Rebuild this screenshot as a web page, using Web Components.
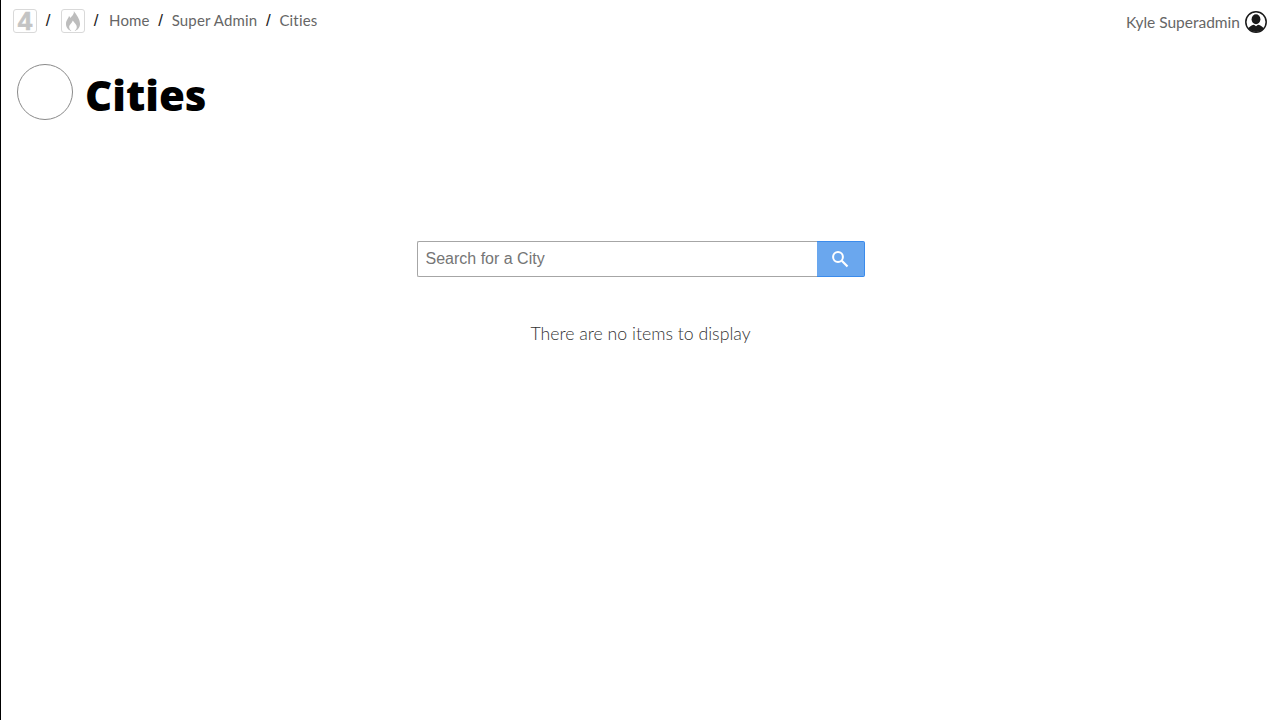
<!DOCTYPE html>
<html>
<head>
<meta charset="utf-8">
<title>Cities</title>
<style>
  html, body { margin: 0; height: 100%; background: #fff; }
  body { border-left: 1px solid #000; box-sizing: border-box; font-family: Lato, "Noto Sans", sans-serif; }
</style>
</head>
<body>
<app-topbar>
  <bread-crumbs slot="left">
    <logo-box>
      <span style="font: 700 26px/24px 'Liberation Sans', sans-serif; color: #c4c4c4; -webkit-text-stroke: 0.6px #c4c4c4;">4</span>
    </logo-box>
    <logo-box>
      <svg width="16" height="20" viewBox="0 0 16 20"><path fill="#bdbdbd" d="M8.8 0C9.4 3.2 6.9 5 5.4 7 5 6.1 4.6 5.5 3.9 5 4 7 1 9 1 13c0 3.6 2.4 6.3 5.4 7-1.4-1-2.2-2.4-2.2-3.9 0-2.5 2.6-3.7 3.6-6.6 1.500 2.400 4 4 4 6.600 0 1.500-.8 2.900-2.200 3.900C12.600 19.300 15 16.600 15 13 15 8 11.400 3.600 8.800 0Z"/></svg>
    </logo-box>
    <a-crumb>Home</a-crumb>
    <a-crumb>Super Admin</a-crumb>
    <a-crumb last>Cities</a-crumb>
  </bread-crumbs>
  <user-menu slot="right" name="Kyle Superadmin"></user-menu>
</app-topbar>
<page-title>Cities</page-title>
<search-panel placeholder="Search for a City" empty="There are no items to display"></search-panel>

<script>
class AppTopbar extends HTMLElement {
  constructor() {
    super();
    this.attachShadow({ mode: "open" });
    this.shadowRoot.innerHTML = `
      <style>
        :host { display: flex; justify-content: space-between; align-items: flex-start; padding: 8px 13px 0 12px; height: 28px; }
      </style>
      <slot name="left"></slot>
      <slot name="right"></slot>
    `;
  }
}

class BreadCrumbs extends HTMLElement {
  constructor() {
    super();
    this.attachShadow({ mode: "open" });
    this.shadowRoot.innerHTML = `
      <style>
        :host { display: flex; align-items: center; height: 25px; }
      </style>
      <slot></slot>
    `;
  }
}

class LogoBox extends HTMLElement {
  constructor() {
    super();
    this.attachShadow({ mode: "open" });
    this.shadowRoot.innerHTML = `
      <style>
        :host { display: inline-flex; align-items: center; }
        .box {
          box-sizing: border-box;
          width: 24px;
          height: 24px;
          display: flex;
          align-items: center;
          justify-content: center;
          border: 1px solid #d9d9d9;
          border-radius: 3px;
        }
        .sep { width: 24px; padding-right: 2px; box-sizing: border-box; text-align: center; font: 17px "Liberation Sans", sans-serif; color: #222; }
      </style>
      <div class="box"><slot></slot></div>
      <span class="sep">/</span>
    `;
  }
}

class ACrumb extends HTMLElement {
  constructor() {
    super();
    this.attachShadow({ mode: "open" });
    const last = this.hasAttribute("last");
    this.shadowRoot.innerHTML = `
      <style>
        :host { display: inline-flex; align-items: center; font: 15px Lato, "Noto Sans", sans-serif; font-variant-ligatures: none; color: #666; }
        .txt { position: relative; top: -1px; letter-spacing: 0.17px; }
        .sep { width: 22px; text-align: center; font: 17px "Liberation Sans", sans-serif; color: #222; }
      </style>
      <span class="txt"><slot></slot></span>${last ? "" : '<span class="sep">/</span>'}
    `;
  }
}

class UserMenu extends HTMLElement {
  constructor() {
    super();
    this.attachShadow({ mode: "open" });
    this.shadowRoot.innerHTML = `
      <style>
        :host { display: flex; align-items: center; gap: 5px; height: 28px; font: 15.5px Lato, "Noto Sans", sans-serif; color: #666; }
        svg { display: block; }
      </style>
      <span>${this.getAttribute("name")}</span>
      <svg width="22" height="22" viewBox="0 0 22 22">
        <defs><clipPath id="c"><circle cx="11" cy="11" r="10"/></clipPath></defs>
        <circle cx="11" cy="11" r="10.200" fill="#fff" stroke="#1a1a1a" stroke-width="1.500"/>
        <g clip-path="url(#c)" fill="#1a1a1a">
          <ellipse cx="11" cy="8.200" rx="4.400" ry="5"/>
          <path d="M2 22c0-5 3.500-7.600 7-8.200l2 1.400 2-1.400c3.500 .6 7 3.200 7 8.200Z"/>
        </g>
      </svg>
    `;
  }
}

class PageTitle extends HTMLElement {
  constructor() {
    super();
    this.attachShadow({ mode: "open" });
    this.shadowRoot.innerHTML = `
      <style>
        :host { display: flex; align-items: center; gap: 12px; padding: 28px 0 0 16px; }
        .circle { box-sizing: border-box; width: 56px; height: 56px; border: 1px solid #8a8a8a; border-radius: 50%; }
        h1 { margin: 6px 0 0; font: 900 42px/50px "Noto Sans", sans-serif; font-variant-ligatures: none; color: #000; }
      </style>
      <div class="circle"></div>
      <h1><slot></slot></h1>
    `;
  }
}

class SearchPanel extends HTMLElement {
  constructor() {
    super();
    this.attachShadow({ mode: "open" });
    this.shadowRoot.innerHTML = `
      <style>
        :host { display: flex; flex-direction: column; align-items: center; padding-top: 121px; }
        .row { display: flex; width: 448px; height: 36px; }
        input {
          box-sizing: border-box;
          flex: 1;
          min-width: 0;
          height: 36px;
          padding: 0 8px;
          border: 1px solid #a6a6a6;
          border-right: 0;
          border-radius: 2px 0 0 2px;
          outline: none;
          font: 16px "Liberation Sans", Arial, sans-serif;
          color: #333;
        }
        input::placeholder { color: #757575; opacity: 1; }
        button {
          box-sizing: border-box;
          width: 48px;
          height: 36px;
          padding: 0;
          display: flex;
          align-items: center;
          justify-content: center;
          background: #6aa7ee;
          border: 1px solid #3b8beb;
          border-left: 0;
          border-radius: 0 2px 2px 0;
        }
        p { margin: 46px 0 0; font: 300 17.700px/22px Lato, "Noto Sans", sans-serif; font-variant-ligatures: none; color: #333; }
      </style>
      <div class="row">
        <input type="text" placeholder="${this.getAttribute("placeholder")}">
        <button type="button" aria-label="Search">
          <svg width="18" height="18" viewBox="0 0 18 18"><circle cx="7" cy="7" r="4.900" fill="none" stroke="#fff" stroke-width="2"/><path d="M10.800 10.800 16.500 16.500" stroke="#fff" stroke-width="2.200" fill="none"/></svg>
        </button>
      </div>
      <p>${this.getAttribute("empty")}</p>
    `;
  }
}

customElements.define("app-topbar", AppTopbar);
customElements.define("bread-crumbs", BreadCrumbs);
customElements.define("logo-box", LogoBox);
customElements.define("a-crumb", ACrumb);
customElements.define("user-menu", UserMenu);
customElements.define("page-title", PageTitle);
customElements.define("search-panel", SearchPanel);
</script>
</body>
</html>
